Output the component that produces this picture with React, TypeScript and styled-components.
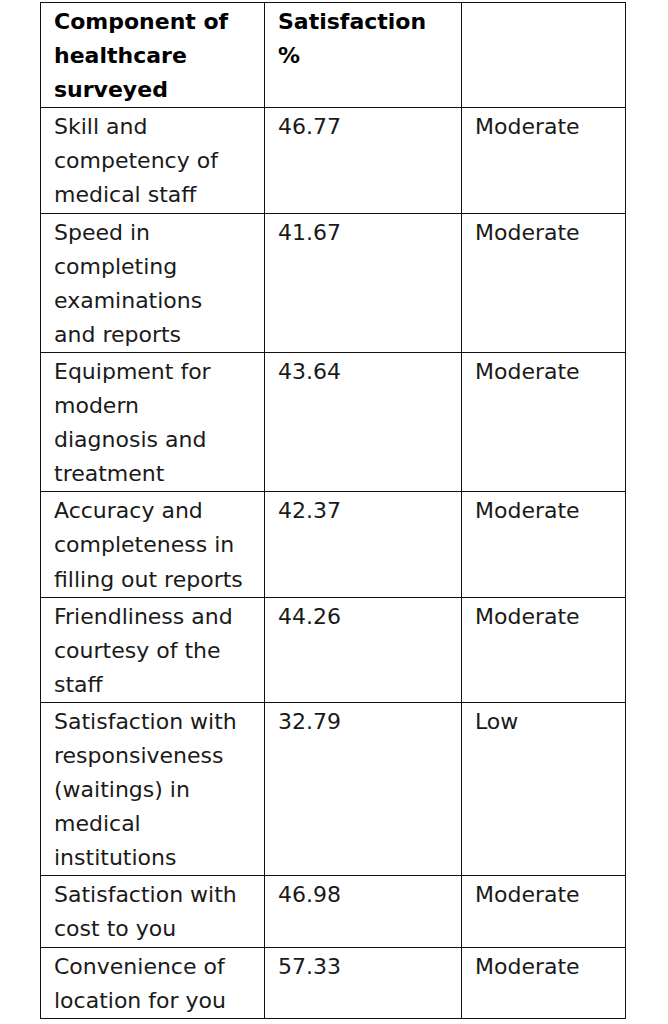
import React, { FC } from 'react';
import styled, { createGlobalStyle } from 'styled-components';

const GlobalStyle = createGlobalStyle`
    html, body {
        margin: 0;
        padding: 0;
        background: #ffffff;
    }
    body {
        font-family: 'DejaVu Sans', 'Liberation Sans', sans-serif;
        color: #1c1c1c;
    }
`;

interface Row {
    component: string[];
    value: string;
    level: string;
}

const rows: Row[] = [
    { component: ['Skill and', 'competency of', 'medical staff'], value: '46.77', level: 'Moderate' },
    { component: ['Speed in', 'completing', 'examinations', 'and reports'], value: '41.67', level: 'Moderate' },
    { component: ['Equipment for', 'modern', 'diagnosis and', 'treatment'], value: '43.64', level: 'Moderate' },
    { component: ['Accuracy and', 'completeness in', 'filling out reports'], value: '42.37', level: 'Moderate' },
    { component: ['Friendliness and', 'courtesy of the', 'staff'], value: '44.26', level: 'Moderate' },
    {
        component: ['Satisfaction with', 'responsiveness', '(waitings) in', 'medical', 'institutions'],
        value: '32.79',
        level: 'Low',
    },
    { component: ['Satisfaction with', 'cost to you'], value: '46.98', level: 'Moderate' },
    { component: ['Convenience of', 'location for you'], value: '57.33', level: 'Moderate' },
];

const Page = styled.div`
    padding: 2px 0 0 40px;
`;

const Table = styled.table`
    border-collapse: collapse;
    table-layout: fixed;
    width: 585px;
    font-size: 22px;
    line-height: 34.1px;
`;

const Col = styled.col<{ $width: number }>`
    width: ${(p) => p.$width}px;
`;

const Cell = styled.td`
    border: 1.5px solid #111111;
    padding: 2px 8px 0 13px;
    vertical-align: top;
    white-space: nowrap;
    text-align: left;
    font-weight: 400;
    color: #1a1a1a;
`;

const HeadCell = styled(Cell).attrs({ as: 'th' })`
    font-weight: 700;
    color: #000000;
`;

const Lines: FC<{ lines: string[] }> = ({ lines }) => (
    <>
        {lines.map((line, i) => (
            <React.Fragment key={i}>
                {i > 0 && <br />}
                {line}
            </React.Fragment>
        ))}
    </>
);

const App: FC = () => {
    return (
        <Page>
            <GlobalStyle />
            <Table>
                <colgroup>
                    <Col $width={224} />
                    <Col $width={197} />
                    <Col $width={164} />
                </colgroup>
                <thead>
                    <tr>
                        <HeadCell>
                            <Lines lines={['Component of', 'healthcare', 'surveyed']} />
                        </HeadCell>
                        <HeadCell>
                            <Lines lines={['Satisfaction', '%']} />
                        </HeadCell>
                        <HeadCell />
                    </tr>
                </thead>
                <tbody>
                    {rows.map((row, i) => (
                        <tr key={i}>
                            <Cell>
                                <Lines lines={row.component} />
                            </Cell>
                            <Cell>{row.value}</Cell>
                            <Cell>{row.level}</Cell>
                        </tr>
                    ))}
                </tbody>
            </Table>
        </Page>
    );
};

export default App;
